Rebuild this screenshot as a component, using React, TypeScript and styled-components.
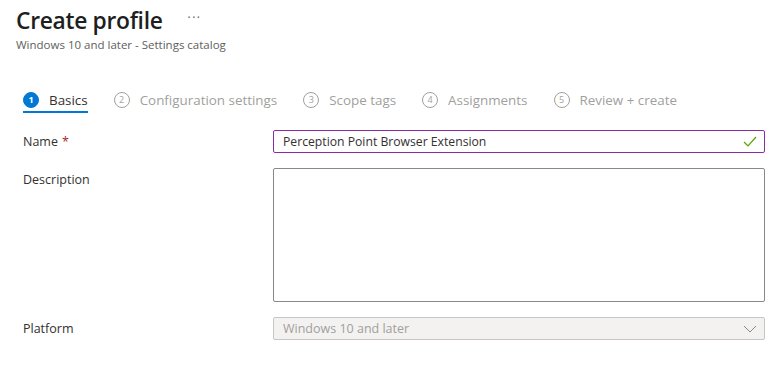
import { FC } from 'react'
import styled, { createGlobalStyle } from 'styled-components'

const GlobalStyle = createGlobalStyle`
  body {
    margin: 0;
    background: #ffffff;
    font-family: "Open Sans", "Noto Sans", "Liberation Sans", sans-serif;
    color: #323130;
  }
`

const steps = [
  { num: 1, label: 'Basics' },
  { num: 2, label: 'Configuration settings' },
  { num: 3, label: 'Scope tags' },
  { num: 4, label: 'Assignments' },
  { num: 5, label: 'Review + create' }
]

const ACTIVE_STEP = 1

const Page = styled.div`
  width: 783px;
  height: 368px;
  box-sizing: border-box;
  padding: 4px 18px 0 16px;
  overflow: hidden;
`

const TitleRow = styled.div`
  display: flex;
  align-items: center;
  gap: 25px;
  height: 33px;
`

const Title = styled.h1`
  margin: 0;
  font-size: 22.8px;
  font-weight: 600;
  line-height: 33px;
  color: #201f1e;
  letter-spacing: -0.3px;
`

const MoreButton = styled.span`
  font-size: 12px;
  color: #605e5c;
  letter-spacing: 1.5px;
  line-height: 1;
  margin-top: -6px;
`

const Subtitle = styled.div`
  font-size: 11.5px;
  line-height: 16px;
  color: #605e5c;
`

const StepList = styled.div`
  display: flex;
  align-items: stretch;
  gap: 26px;
  margin: 33px 0 0 7px;
  height: 27px;
`

const Step = styled.div<{ active: boolean }>`
  display: flex;
  align-items: center;
  gap: 10px;
  height: 27px;
  box-sizing: border-box;
  border-bottom: 2px solid ${({ active }) => (active ? '#0078d4' : 'transparent')};
  padding-top: 2px;
  font-size: 13.4px;
  color: ${({ active }) => (active ? '#323130' : '#a19f9d')};
`

const StepBadge = styled.span<{ active: boolean }>`
  display: inline-flex;
  align-items: center;
  justify-content: center;
  width: 16px;
  height: 16px;
  box-sizing: border-box;
  border-radius: 50%;
  font-size: 9px;
  font-weight: ${({ active }) => (active ? 700 : 400)};
  background: ${({ active }) => (active ? '#0078d4' : '#ffffff')};
  color: ${({ active }) => (active ? '#ffffff' : '#a19f9d')};
  border: 1px solid ${({ active }) => (active ? '#0078d4' : '#a19f9d')};
`

const Form = styled.div`
  display: flex;
  flex-direction: column;
  gap: 15px;
  margin: 17px 0 0 7px;
`

const FieldRow = styled.div`
  display: grid;
  grid-template-columns: 250px 1fr;
  align-items: start;
`

const Label = styled.label`
  font-size: 12.5px;
  line-height: 23px;
  color: #323130;
`

const Required = styled.span`
  color: #a4262c;
  margin-left: 4px;
`

const InputBox = styled.div<{ disabled?: boolean; focused?: boolean }>`
  display: flex;
  align-items: center;
  justify-content: space-between;
  height: 23px;
  box-sizing: border-box;
  padding: 0 7px 0 9px;
  border: 1px solid ${({ focused, disabled }) => (focused ? '#8a2da5' : disabled ? '#c8c6c4' : '#8a8886')};
  border-radius: 2px;
  background: ${({ disabled }) => (disabled ? '#f3f2f1' : '#ffffff')};
  font-size: ${({ disabled }) => (disabled ? '12.5px' : '12.2px')};
  color: ${({ disabled }) => (disabled ? '#a19f9d' : '#323130')};
`

const TextArea = styled.div`
  height: 134px;
  box-sizing: border-box;
  border: 1px solid #8a8886;
  border-radius: 2px;
  background: #ffffff;
`

const CheckIcon: FC = () => (
  <svg width="14" height="11" viewBox="0 0 14 11" fill="none">
    <path d="M1 6 L5 10 L13 1" stroke="#57a300" strokeWidth="1.2" />
  </svg>
)

const ChevronIcon: FC = () => (
  <svg width="14" height="8" viewBox="0 0 14 8" fill="none">
    <path d="M1 1 L7 7 L13 1" stroke="#8a8886" strokeWidth="1" />
  </svg>
)

export default function App() {
  return (
    <Page>
      <GlobalStyle />
      <TitleRow>
        <Title>Create profile</Title>
        <MoreButton>···</MoreButton>
      </TitleRow>
      <Subtitle>Windows 10 and later - Settings catalog</Subtitle>

      <StepList>
        {steps.map((s) => {
          const active = s.num === ACTIVE_STEP
          return (
            <Step key={s.num} active={active}>
              <StepBadge active={active}>{s.num}</StepBadge>
              {s.label}
            </Step>
          )
        })}
      </StepList>

      <Form>
        <FieldRow>
          <Label>
            Name<Required>*</Required>
          </Label>
          <InputBox focused>
            Perception Point Browser Extension
            <CheckIcon />
          </InputBox>
        </FieldRow>
        <FieldRow>
          <Label>Description</Label>
          <TextArea />
        </FieldRow>
        <FieldRow>
          <Label>Platform</Label>
          <InputBox disabled>
            Windows 10 and later
            <ChevronIcon />
          </InputBox>
        </FieldRow>
      </Form>
    </Page>
  )
}
